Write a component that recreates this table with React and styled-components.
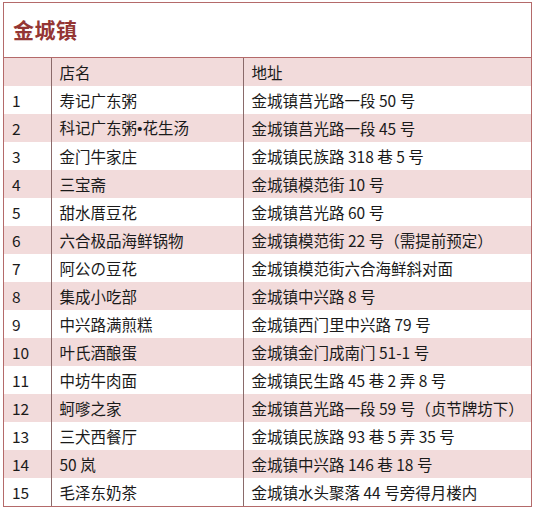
import React from 'react';
import styled, { createGlobalStyle } from 'styled-components';

const Global = createGlobalStyle`
  body {
    margin: 0;
    background: #ffffff;
    font-family: "Noto Sans CJK SC", "Noto Sans", sans-serif;
  }
`;

const Page = styled.div`
  padding: 2px 3px 0 3px;
  width: 535px;
  box-sizing: border-box;
`;

const Frame = styled.div`
  border: 1px solid #b46a6a;
  width: 529px;
  box-sizing: border-box;
`;

const TitleBar = styled.div`
  height: 55px;
  display: flex;
  align-items: center;
  padding-left: 9px;
  padding-bottom: 3px;
  box-sizing: border-box;
  border-bottom: 1px solid #b46a6a;
`;

const Title = styled.h1`
  margin: 0;
  font-size: 21px;
  font-weight: bold;
  color: #943634;
  letter-spacing: 0.5px;
`;

const Table = styled.table`
  width: 100%;
  border-collapse: collapse;
  table-layout: fixed;
`;

const Row = styled.tr`
  background: ${(p) => (p.$shade ? '#f2dbdb' : '#ffffff')};
  & + & td {
    border-top: 1px dotted #000000;
  }
`;

const Cell = styled.td`
  height: 28px;
  padding: 0 0 0 8px;
  font-size: 15.5px;
  color: #1a1a1a;
  white-space: nowrap;
  border-left: 1px solid #8a6a6a;
  &:first-child {
    border-left: none;
  }
  line-height: 27px;
`;

const Dot = styled.span`
  font-family: "Liberation Sans", sans-serif;
`;

const rows = [
  ['1', '寿记广东粥', '金城镇莒光路一段 50 号'],
  ['2', <>科记广东粥<Dot>•</Dot>花生汤</>, '金城镇莒光路一段 45 号'],
  ['3', '金门牛家庄', '金城镇民族路 318 巷 5 号'],
  ['4', '三宝斋', '金城镇模范街 10 号'],
  ['5', '甜水厝豆花', '金城镇莒光路 60 号'],
  ['6', '六合极品海鲜锅物', '金城镇模范街 22 号（需提前预定）'],
  ['7', '阿公の豆花', '金城镇模范街六合海鲜斜对面'],
  ['8', '集成小吃部', '金城镇中兴路 8 号'],
  ['9', '中兴路满煎糕', '金城镇西门里中兴路 79 号'],
  ['10', '叶氏酒酿蛋', '金城镇金门成南门 51-1 号'],
  ['11', '中坊牛肉面', '金城镇民生路 45 巷 2 弄 8 号'],
  ['12', '蚵嗲之家', '金城镇莒光路一段 59 号（贞节牌坊下）'],
  ['13', '三犬西餐厅', '金城镇民族路 93 巷 5 弄 35 号'],
  ['14', '50 岚', '金城镇中兴路 146 巷 18 号'],
  ['15', '毛泽东奶茶', '金城镇水头聚落 44 号旁得月楼内'],
];

const App = () => (
  <Page>
    <Global />
    <Frame>
      <TitleBar>
        <Title>金城镇</Title>
      </TitleBar>
      <Table>
        <colgroup>
          <col style={{ width: 47 }} />
          <col style={{ width: 192 }} />
          <col />
        </colgroup>
        <tbody>
          <Row $shade>
            <Cell></Cell>
            <Cell>店名</Cell>
            <Cell>地址</Cell>
          </Row>
          {rows.map((r, i) => (
            <Row key={r[0]} $shade={i % 2 === 1}>
              <Cell>{r[0]}</Cell>
              <Cell>{r[1]}</Cell>
              <Cell>{r[2]}</Cell>
            </Row>
          ))}
        </tbody>
      </Table>
    </Frame>
  </Page>
);

export default App;
